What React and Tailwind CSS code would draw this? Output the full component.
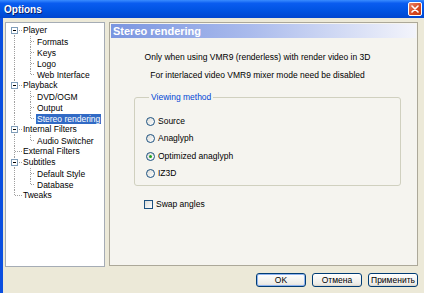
import React from 'react';

const tree = [
    { label: 'Player', children: ['Formats', 'Keys', 'Logo', 'Web Interface'] },
    { label: 'Playback', children: ['DVD/OGM', 'Output', 'Stereo rendering'] },
    { label: 'Internal Filters', children: ['Audio Switcher'] },
    { label: 'External Filters' },
    { label: 'Subtitles', children: ['Default Style', 'Database'] },
    { label: 'Tweaks' },
];

const dot = { stroke: '#A0A0A0', strokeWidth: 1, strokeDasharray: '1 1', shapeRendering: 'crispEdges' };

const TopRow = ({ label, hasChildren, first, last }) => (
    <div className="flex items-center h-[11px]">
        <svg width="17" height="11" className="shrink-0">
            <line x1="8.5" y1={first ? 5.5 : 0} x2="8.5" y2={last ? 5.5 : 11} {...dot} />
            <line x1="8.5" y1="5.5" x2="16" y2="5.5" {...dot} />
            {hasChildren && (
                <g shapeRendering="crispEdges">
                    <rect x="5.5" y="2.5" width="6" height="6" fill="#fff" stroke="#7F9DB9" />
                    <line x1="7" y1="5.5" x2="10" y2="5.5" stroke="#000" />
                </g>
            )}
        </svg>
        <span className="leading-[11px] whitespace-nowrap">{label}</span>
    </div>
);

const ChildRow = ({ label, lastChild, selected }) => (
    <div className="flex items-center h-[11px]">
        <svg width="30" height="11" className="shrink-0">
            <line x1="8.5" y1="0" x2="8.5" y2="11" {...dot} />
            <line x1="24.5" y1="0" x2="24.5" y2={lastChild ? 5.5 : 11} {...dot} />
            <line x1="24.5" y1="5.5" x2="29" y2="5.5" {...dot} />
        </svg>
        <span className={`leading-[10px] whitespace-nowrap px-[1px] ${selected ? 'bg-[#316AC5] text-white' : ''}`}>{label}</span>
    </div>
);

const Radio = ({ label, checked }) => (
    <div className="flex items-center h-[10px] gap-[3px]">
        <span className="w-[9px] h-[9px] rounded-full border border-[#1C5180] bg-[linear-gradient(135deg,#DCDCD7,#FFFFFF)] flex items-center justify-center">
            {checked && <span className="w-[3px] h-[3px] rounded-full bg-[#21A121]" />}
        </span>
        <span>{label}</span>
    </div>
);

const Button = ({ children, primary }) => (
    <div className={`w-[50px] h-[14px] rounded-[3px] border border-[#003C74] flex items-center justify-center bg-[linear-gradient(#FFFFFF,#ECEBE6_85%,#D6D0C5)] ${primary ? 'shadow-[inset_0_0_0_1px_#8FB3EF]' : ''}`}>
        {children}
    </div>
);

export default function App() {
    return (
        <div className="w-[424px] h-[293px] flex flex-col overflow-hidden bg-[#ECE9D8] text-[8.5px] text-black font-['Liberation_Sans',Arial,sans-serif]">
            {/* Title bar */}
            <div className="h-[18px] shrink-0 flex items-center justify-between pl-[4px] pr-[2px] bg-[linear-gradient(#3A8CFF_0%,#0A5CF0_18%,#0053E2_60%,#0046D0_100%)]">
                <span className="text-white font-bold text-[10px] [text-shadow:1px_1px_0_#0A1E6A]">Options</span>
                <div className="w-[14px] h-[14px] rounded-[2px] border border-white bg-[linear-gradient(135deg,#E9866A,#D6461E_60%,#C23A12)] flex items-center justify-center">
                    <svg width="8" height="8" viewBox="0 0 8 8">
                        <path d="M1 1 L7 7 M7 1 L1 7" stroke="#fff" strokeWidth="1.6" strokeLinecap="round" />
                    </svg>
                </div>
            </div>

            {/* Body */}
            <div className="flex-1 flex flex-col border-l-[3px] border-[#0B4FE0] pl-[2px] pr-[6px] pt-[4px] pb-[6px]">
                <div className="flex gap-[4px] h-[245px]">
                    {/* Tree */}
                    <div className="w-[100px] bg-white border border-[#A5ACB5] pt-[2px]">
                        {tree.map((node, i) => (
                            <React.Fragment key={node.label}>
                                <TopRow
                                    label={node.label}
                                    hasChildren={!!node.children}
                                    first={i === 0}
                                    last={i === tree.length - 1}
                                />
                                {(node.children || []).map((c, j) => (
                                    <ChildRow
                                        key={c}
                                        label={c}
                                        lastChild={j === node.children.length - 1}
                                        selected={c === 'Stereo rendering'}
                                    />
                                ))}
                            </React.Fragment>
                        ))}
                    </div>

                    {/* Page */}
                    <div className="flex-1 h-[244px] flex flex-col bg-[#F5F4EF] border border-[#ACA899] p-[1px]">
                        <div className="h-[14px] flex items-center pl-[2px] bg-[linear-gradient(90deg,#7A95E0,#A9BAEC_45%,#F3F4FB)]">
                            <span className="text-white font-bold text-[11px] leading-none">Stereo rendering</span>
                        </div>
                        <div className="flex flex-col items-center pr-[12px] mt-[14px] gap-[8px] leading-[10px]">
                            <span>Only when using VMR9 (renderless) with render video in 3D</span>
                            <span>For interlaced video VMR9 mixer mode need be disabled</span>
                        </div>
                        <fieldset className="ml-[23px] mr-[15px] mt-[12px] h-[94px] border border-[#D0D0BF] rounded-[3px] pl-[11px] pt-[14px] flex flex-col gap-[7.5px]">
                            <legend className="ml-[3px] px-[2px] text-[#0046D5] leading-[10px]">Viewing method</legend>
                            <Radio label="Source" />
                            <Radio label="Anaglyph" />
                            <Radio label="Optimized anaglyph" checked />
                            <Radio label="IZ3D" />
                        </fieldset>
                        <div className="flex items-center gap-[3px] ml-[33px] mt-[12px]">
                            <span className="w-[9px] h-[9px] border border-[#1C5180] bg-[linear-gradient(135deg,#DCDCD7,#FFFFFF)]" />
                            <span>Swap angles</span>
                        </div>
                    </div>
                </div>

                {/* Buttons */}
                <div className="flex justify-end gap-[6px] mt-[6px]">
                    <Button primary>OK</Button>
                    <Button>Отмена</Button>
                    <Button>Применить</Button>
                </div>
            </div>
        </div>
    );
}
